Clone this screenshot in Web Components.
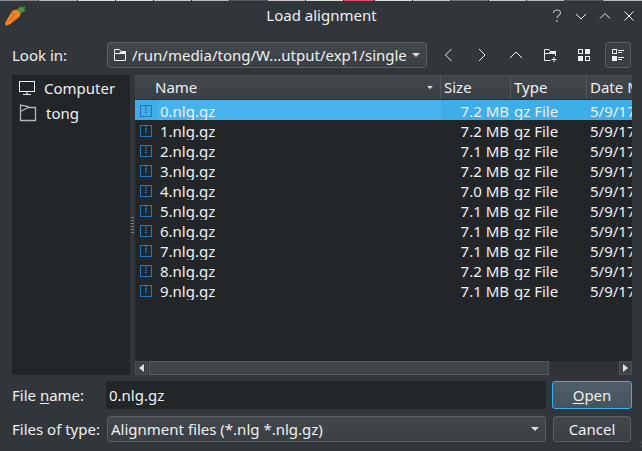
<!DOCTYPE html>
<html>
<head>
<meta charset="utf-8">
<title>Load alignment</title>
<style>
html, body { margin: 0; height: 451px; overflow: hidden; background: #31363b; }
body { font: 15px/20px "Noto Sans", sans-serif; color: #eff0f1; }
</style>
</head>
<body>
<load-dialog></load-dialog>
<script>
'use strict';

const ICONS = {
    carrot: `<svg width="26" height="26" viewBox="0 0 26 26"><path d="M5 24.500C3.500 24.500 4 22 5.500 19.500L10.500 11C12.500 8.500 16.500 8 18.500 10C20.500 12 19.500 15 17.500 16.500L9.500 22.800C7.500 24 6 24.500 5 24.500Z" fill="#f4842a"/><path d="M7 21L12 15M11 20L14 17M11 12.500L14 14" stroke="#c95f12" stroke-width="1" fill="none"/><path d="M16 9.500C16.500 8 18 6.500 20 5L21 6.500L24.500 5L23 8.500L25 9.500C23 11 20.500 11.800 19 11.500Z" fill="#4f8f35"/></svg>`,
    folder: `<svg width="14" height="14" viewBox="0 0 14 14" fill="none" stroke="#eff0f1"><path d="M1.500 12.500V1.500H6.500L8 3.500H12.500V12.500Z"/><path d="M1.500 5.500H12.500V3.500H8L6.500 5.500Z" fill="#eff0f1"/></svg>`,
    back: `<svg width="12" height="14" viewBox="0 0 12 14" fill="none" stroke="#eff0f1"><path d="M9.500 1L3.500 7L9.500 13"/></svg>`,
    forward: `<svg width="12" height="14" viewBox="0 0 12 14" fill="none" stroke="#eff0f1"><path d="M3 1L9 7L3 13"/></svg>`,
    up: `<svg width="14" height="12" viewBox="0 0 14 12" fill="none" stroke="#eff0f1"><path d="M1 9L7 3L13 9"/></svg>`,
    newFolder: `<svg width="14" height="14" viewBox="0 0 14 14" fill="none" stroke="#eff0f1"><path d="M7.500 12.500H1.500V1.500H6L7.500 3.500H12.500V8"/><path d="M1.500 5.500H12.500V3.500H7.500L6 5.500Z" fill="#eff0f1"/><path d="M11 9V14M8.500 11.500H13.500"/></svg>`,
    icons: `<svg width="14" height="14" viewBox="0 0 14 14" fill="none" stroke="#eff0f1"><rect x="1.500" y="1.500" width="4" height="4"/><rect x="8" y="1" width="5" height="5" fill="#eff0f1" stroke="none"/><rect x="1" y="8" width="5" height="5" fill="#eff0f1" stroke="none"/><rect x="8.500" y="8.500" width="4" height="4"/></svg>`,
    detail: `<svg width="14" height="14" viewBox="0 0 14 14" fill="none" stroke="#eff0f1"><rect x="1.500" y="1.500" width="4" height="4"/><rect x="1" y="8" width="5" height="5" fill="#eff0f1" stroke="none"/><path d="M7 2.500H13M7 4.500H11M7 9.500H13M7 11.500H11"/></svg>`,
    computer: `<svg width="18" height="16" viewBox="0 0 18 16" fill="none" stroke="#eff0f1"><rect x="1.500" y="1.500" width="15" height="10"/><path d="M9 11.500V14.500M5 14.500H13"/></svg>`,
    home: `<svg width="18" height="18" viewBox="0 0 18 18" fill="none" stroke="#b5b8ba" stroke-width="1.300"><path d="M1.500 16.500V1L9 2.500V3.500H16.500V16.500Z"/><path d="M1.500 7.500L9 3.500"/></svg>`,
    archive: `<svg width="12" height="12" viewBox="0 0 12 12" fill="none" stroke="#2a74b8"><rect x="0.500" y="0.500" width="11" height="11"/><path d="M6 1V9" stroke-dasharray="1 1" stroke-width="2"/></svg>`,
    help: `<svg width="12" height="14" viewBox="0 0 12 14" fill="none" stroke="#b9bbbd" stroke-width="1.100"><path d="M2.500 4C2.500 2 4 1 6 1C8 1 9.500 2.200 9.500 4C9.500 6.500 6 6.500 6 9"/><path d="M6 11V13"/></svg>`,
    min: `<svg width="12" height="12" viewBox="0 0 12 12" fill="none" stroke="#eff0f1"><path d="M1 4L6 9L11 4"/></svg>`,
    max: `<svg width="12" height="12" viewBox="0 0 12 12" fill="none" stroke="#eff0f1"><path d="M1 8.500L6 3.500L11 8.500"/></svg>`,
    close: `<svg width="12" height="12" viewBox="0 0 12 12" fill="none" stroke="#eff0f1"><path d="M1.500 1.500L10.500 10.500M10.500 1.500L1.500 10.500"/></svg>`,
    grip: `<svg width="12" height="10" viewBox="0 0 12 10" fill="#5a5f64"><rect x="10" y="1" width="1" height="1"/><rect x="6" y="5" width="1" height="1"/><rect x="10" y="5" width="1" height="1"/></svg>`
};

const FILES = [
    ['0.nlg.gz', '7.2 MB'], ['1.nlg.gz', '7.2 MB'], ['2.nlg.gz', '7.1 MB'],
    ['3.nlg.gz', '7.2 MB'], ['4.nlg.gz', '7.0 MB'], ['5.nlg.gz', '7.1 MB'],
    ['6.nlg.gz', '7.1 MB'], ['7.nlg.gz', '7.1 MB'], ['8.nlg.gz', '7.2 MB'],
    ['9.nlg.gz', '7.1 MB']
];

// What is left of the desktop behind the window, along the very top edge
const STRIP = [
    [39, '#8a8a8a'], [39, '#bcbcbc'], [38, '#dddddd'], [38, '#dddddd'], [38, '#cccccc'],
    [38, '#bbbbbb'], [38, '#555a5e'], [38, '#cccccc'], [38, '#dddddd'], [31, '#d9536f'],
    [38, '#dddddd'], [38, '#cccccc'], [38, '#777b7e'], [38, '#cccccc'], [38, '#bbbbbb'],
    [38, '#555a5e'], [41, '#bbbbbb']
];

// Small base class, every element only has to say what goes in its shadow root
class ShadowElement extends HTMLElement {
    constructor()
    {
        super();
        this.attachShadow({ mode: 'open' }).innerHTML = this.render();
    }
}

class DialogTitlebar extends ShadowElement {
    render()
    {
        const strip = STRIP.map(s => `<i style="width:${s[0] - 1}px;background:${s[1]}"></i>`).join('');
        return `<style>
        :host { display: block; height: 32px; position: relative; }
        .strip { display: flex; gap: 1px; height: 1px; background: #2a2e32; }
        .strip i { display: block; flex: none; }
        .bar { display: flex; align-items: center; height: 31px; }
        .logo { display: flex; margin: 0 0 5px 1px; }
        .title { position: absolute; left: 1px; right: 0; text-align: center; top: 5px; }
        .btns { margin: 0 0 2px auto; display: flex; gap: 12px; padding-right: 7px; align-items: center; position: relative; }
        svg { display: block; }
        </style>
        <div class="strip">${strip}</div>
        <div class="bar">
            <div class="logo">${ICONS.carrot}</div>
            <div class="title"><slot></slot></div>
            <div class="btns">${ICONS.help}${ICONS.min}${ICONS.max}${ICONS.close}</div>
        </div>`;
    }
}

class ComboBox extends ShadowElement {
    render()
    {
        return `<style>
        :host { display: flex; align-items: center; box-sizing: border-box; height: 26px; padding: 0 6px 0 var(--pad, 5px); gap: 5px;
            border: 1px solid #5a5f64; border-radius: 3px; background: linear-gradient(#43484d, #3a3f44); white-space: nowrap; }
        .text { flex: 1; overflow: hidden; }
        .arrow { width: 0; height: 0; border: 4px solid transparent; border-top: 4px solid #dfe0e1; border-bottom: 0; }
        ::slotted(svg) { display: block; }
        </style>
        <slot name="icon"></slot><div class="text"><slot></slot></div><div class="arrow"></div>`;
    }
}

class ToolButton extends ShadowElement {
    render()
    {
        return `<style>
        :host { display: flex; align-items: center; justify-content: center; width: 26px; height: 26px; box-sizing: border-box; border-radius: 3px; }
        :host([checked]) { border: 1px solid #5a5f64; background: #3a3f44; }
        ::slotted(svg) { display: block; }
        </style><slot></slot>`;
    }
}

class PushButton extends ShadowElement {
    render()
    {
        return `<style>
        :host { display: flex; align-items: center; justify-content: center; box-sizing: border-box; width: 78px; height: 26px; margin-left: 1px;
            border: 1px solid #5a5f64; border-radius: 3px; background: linear-gradient(#43484d, #3a3f44); }
        :host([default]) { width: 80px; margin-left: 0; height: 28px; border-color: #3daee9; background: linear-gradient(#4f5e69, #45535e); }
        </style><slot></slot>`;
    }
}

class PlacesPanel extends ShadowElement {
    render()
    {
        return `<style>
        :host { display: block; background: #232629; padding-top: 1px; }
        .place { display: flex; align-items: center; height: 24px; }
        .computer svg { margin: 0 8px 0 6px; }
        .home { margin-top: 1px; }
        .home svg { margin: 0 9px 0 7px; }
        svg { display: block; }
        </style>
        <div class="place computer">${ICONS.computer}<span>Computer</span></div>
        <div class="place home">${ICONS.home}<span>tong</span></div>`;
    }
}

class FileRow extends ShadowElement {
    render()
    {
        return `<style>
        :host { display: grid; grid-template-columns: 306px 70px 76px 1fr; height: 20px; line-height: 22px; white-space: nowrap; overflow: hidden; }
        :host([selected]) { background: #3daee9; }
        :host([selected]) .name span { background: #47b2ec; }
        .name { display: flex; align-items: center; padding-left: 5px; gap: 6px; }
        .name svg { display: block; flex: none; }
        .name span { flex: 1; align-self: stretch; padding-left: 2px; }
        .size { text-align: right; padding-right: 2px; }
        .type { padding-left: 3px; }
        .date { padding-left: 3px; overflow: hidden; }
        </style>
        <div class="name">${ICONS.archive}<span>${this.getAttribute('name')}</span></div>
        <div class="size">${this.getAttribute('size')}</div>
        <div class="type">gz File</div>
        <div class="date">5/9/17</div>`;
    }
}

class FileList extends ShadowElement {
    render()
    {
        const rows = FILES.map((f, i) => `<file-row name="${f[0]}" size="${f[1]}"${i === 0 ? ' selected' : ''}></file-row>`).join('');
        return `<style>
        :host { display: flex; flex-direction: column; background: #232629; min-width: 0; overflow: hidden; }
        .head { display: grid; grid-template-columns: 306px 70px 76px 1fr; height: 25px; box-sizing: border-box; background: linear-gradient(#43484d, #3a3f44); border-bottom: 1px solid #2a2e32; white-space: nowrap; overflow: hidden; flex: none; }
        .head div { display: flex; align-items: center; padding-left: 3px; border-right: 1px solid #53585d; overflow: hidden; min-width: 0; }
        .head .name { padding-left: 20px; position: relative; }
        .head .name::after { content: ""; position: absolute; right: 7px; top: 11px; border: 3px solid transparent; border-top: 3px solid #dfe0e1; border-bottom: 0; }
        .head div:last-child { border-right: 0; }
        .rows { flex: 1; }
        .bar { flex: none; height: 14px; display: flex; background: #2f3337; box-sizing: border-box; }
        .btn { width: 13px; background: #3c4146; border: 1px solid #4b5055; box-sizing: border-box; display: flex; align-items: center; justify-content: center; }
        .l { border-right: 5px solid #dfe0e1; border-top: 4px solid transparent; border-bottom: 4px solid transparent; }
        .r { border-left: 5px solid #dfe0e1; border-top: 4px solid transparent; border-bottom: 4px solid transparent; }
        .thumb { margin-left: 1px; width: 400px; background: #3f4449; border: 1px solid #565b60; box-sizing: border-box; }
        .rest { flex: 1; }
        </style>
        <div class="head"><div class="name">Name</div><div>Size</div><div>Type</div><div>Date M</div></div>
        <div class="rows">${rows}</div>
        <div class="bar"><div class="btn"><div class="l"></div></div><div class="thumb"></div><div class="rest"></div><div class="btn"><div class="r"></div></div></div>`;
    }
}

class LoadDialog extends ShadowElement {
    render()
    {
        return `<style>
        :host { display: flex; flex-direction: column; height: 451px; background: #31363b; position: relative; }
        .row { display: flex; align-items: center; }
        .look { padding: 10px 10px 0 12px; height: 26px; }
        .look .label { width: 95px; }
        .look combo-box { width: 320px; }
        .tools { display: flex; margin-left: 8px; gap: 8px; }
        .panes { flex: none; display: grid; grid-template-columns: 118px 5px 1fr; height: 300px; margin: 7px 10px 0 12px; }
        .handle { display: flex; align-items: center; justify-content: center; }
        .handle i { display: block; width: 3px; height: 16px; background: repeating-linear-gradient(#7a7e82 0 1px, transparent 1px 3px); }
        .labels { display: grid; grid-template-columns: 88px 1fr 80px; column-gap: 6px; row-gap: 7px; align-items: center; padding: 6px 10px 0 12px; }
        .labels combo-box { --pad: 3px; margin: 0 0 0 1px; }
        .field { height: 28px; border-radius: 3px; background: #232629; padding-left: 3px; line-height: 28px; }
        u { text-underline-offset: 2px; }
        svg { display: block; }
        .grip { position: absolute; right: 0; bottom: 0; }
        </style>
        <dialog-titlebar>Load alignment</dialog-titlebar>
        <div class="row look">
            <div class="label">Look in:</div>
            <combo-box><span slot="icon">${ICONS.folder}</span>/run/media/tong/W...utput/exp1/single</combo-box>
            <div class="tools">
                <tool-button>${ICONS.back}</tool-button>
                <tool-button>${ICONS.forward}</tool-button>
                <tool-button>${ICONS.up}</tool-button>
                <tool-button>${ICONS.newFolder}</tool-button>
                <tool-button>${ICONS.icons}</tool-button>
                <tool-button checked>${ICONS.detail}</tool-button>
            </div>
        </div>
        <div class="panes">
            <places-panel></places-panel>
            <div class="handle"><i></i></div>
            <file-list></file-list>
        </div>
        <div class="labels">
            <div>File <u>n</u>ame:</div>
            <div class="field">0.nlg.gz</div>
            <push-button default><span><u>O</u>pen</span></push-button>
            <div>Files of type:</div>
            <combo-box>Alignment files (*.nlg *.nlg.gz)</combo-box>
            <push-button>Cancel</push-button>
        </div>
        <div class="grip">${ICONS.grip}</div>`;
    }
}

customElements.define('dialog-titlebar', DialogTitlebar);
customElements.define('combo-box', ComboBox);
customElements.define('tool-button', ToolButton);
customElements.define('push-button', PushButton);
customElements.define('places-panel', PlacesPanel);
customElements.define('file-row', FileRow);
customElements.define('file-list', FileList);
customElements.define('load-dialog', LoadDialog);
</script>
</body>
</html>
